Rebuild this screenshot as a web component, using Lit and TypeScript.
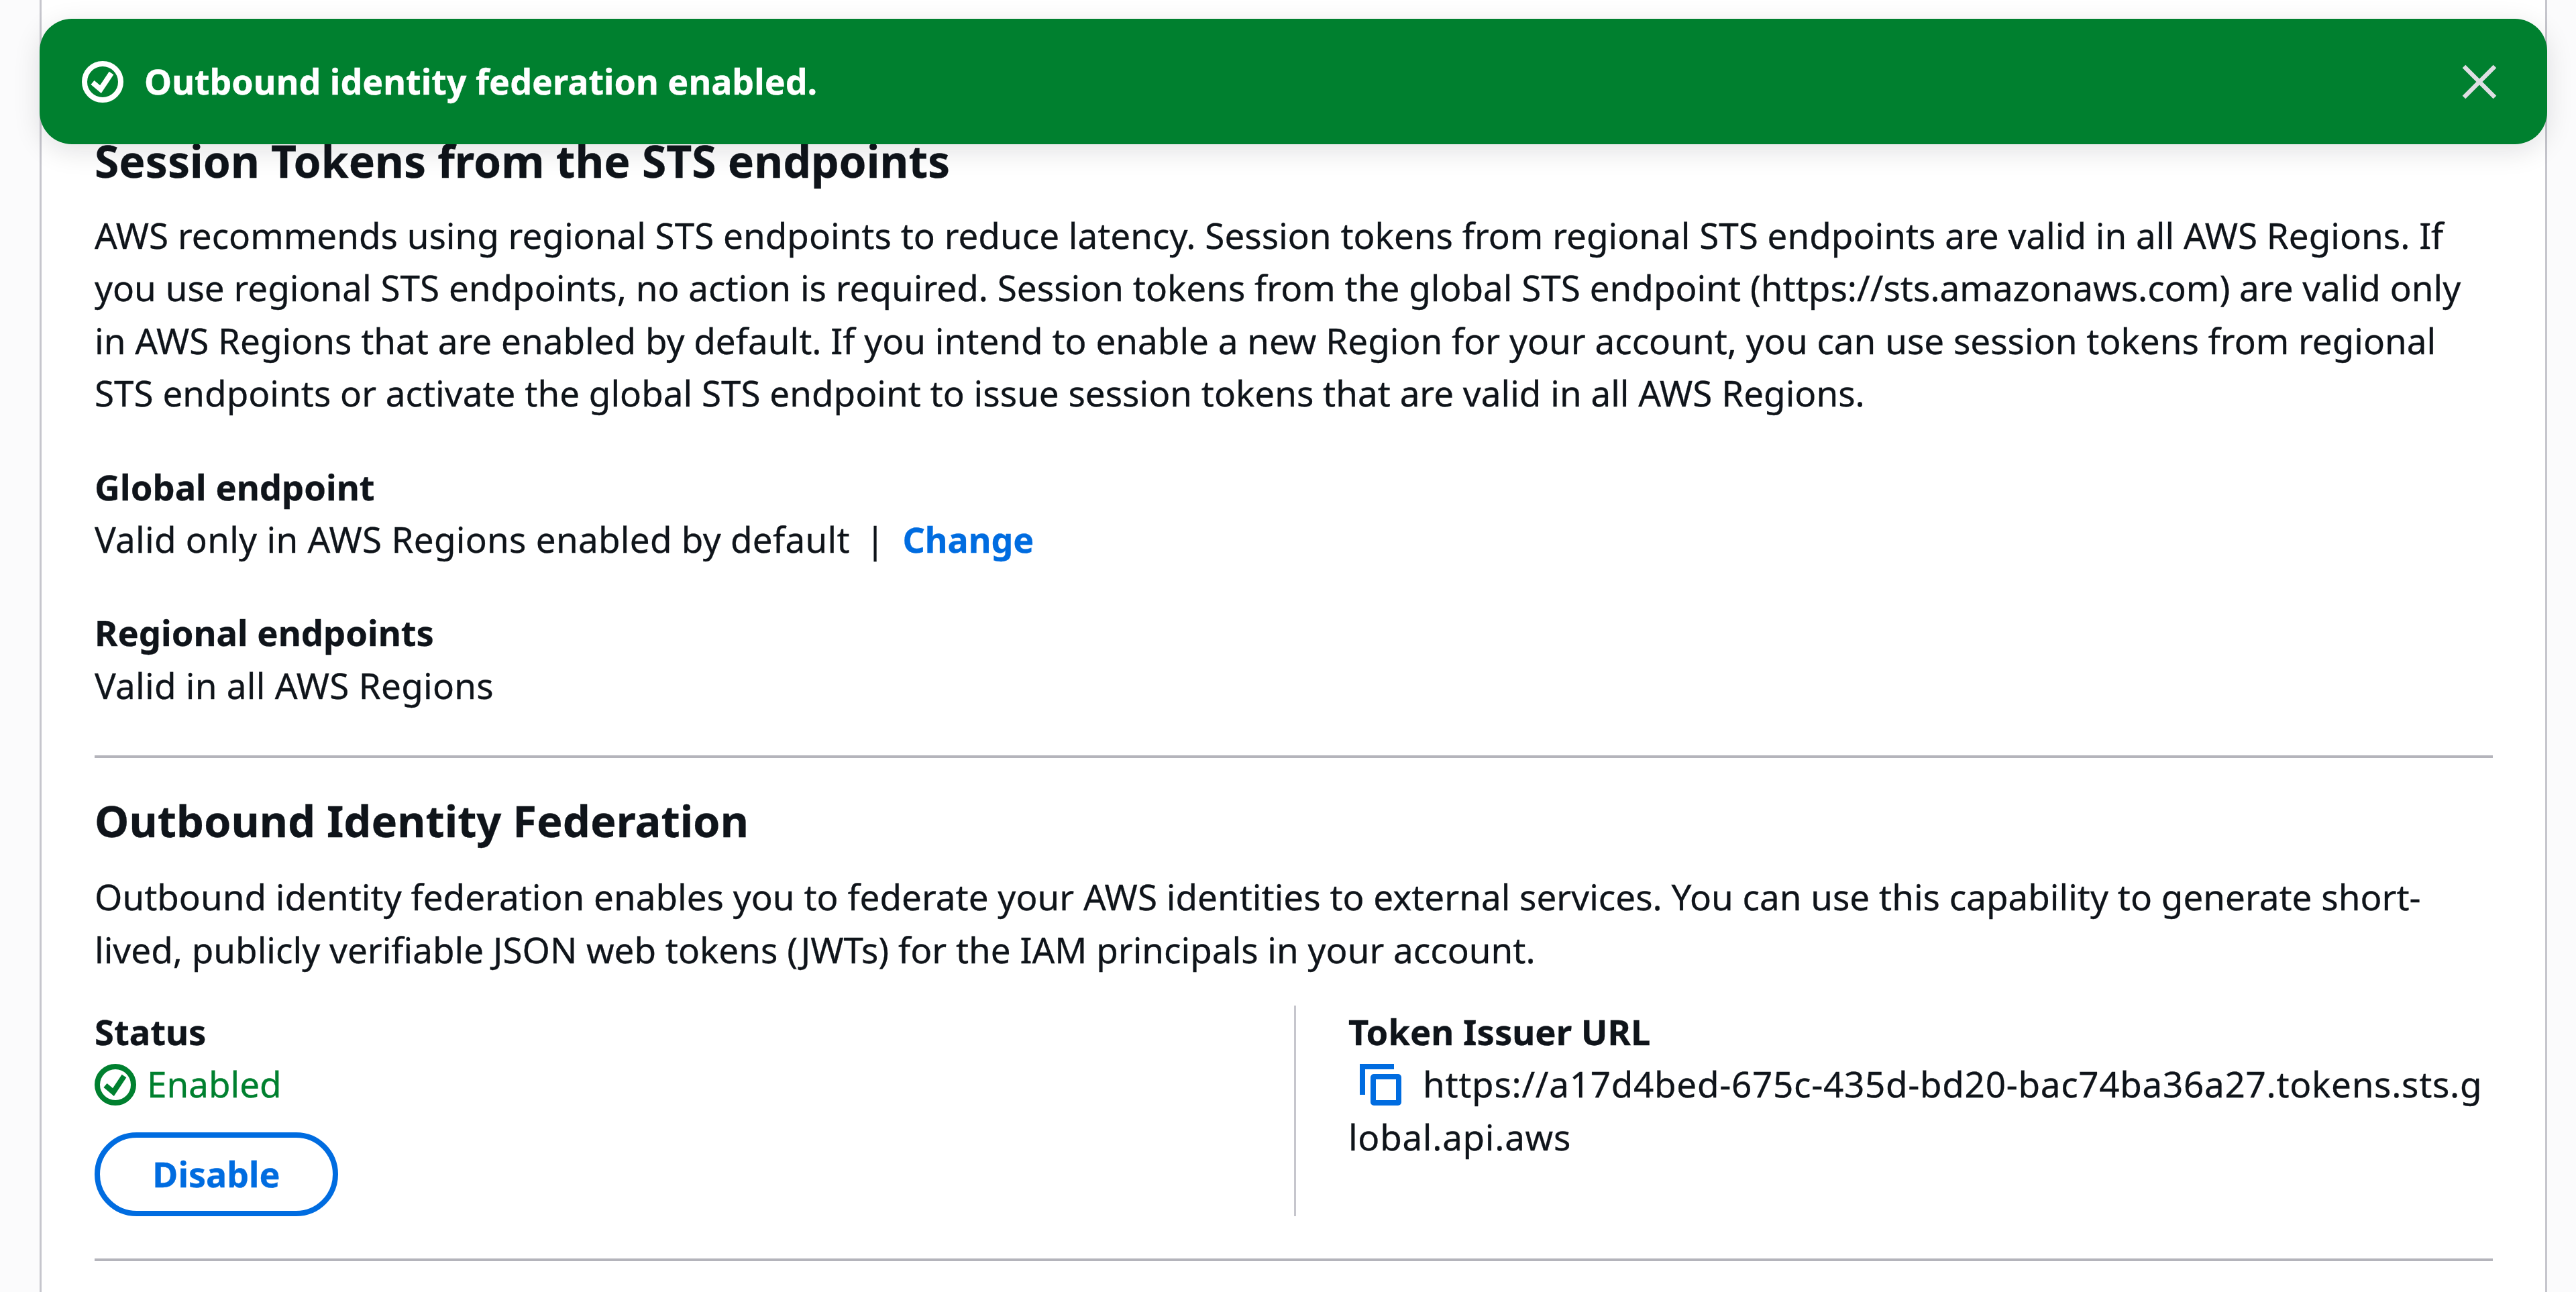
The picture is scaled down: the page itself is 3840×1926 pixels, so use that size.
import { LitElement, html, css, svg } from 'lit';
import { customElement } from 'lit/decorators.js';

const circleCheck = svg`<circle cx="31" cy="31" r="27" fill="none" stroke="currentColor" stroke-width="8"/><path d="M16 32l12 10 16-24" fill="none" stroke="currentColor" stroke-width="8"/>`;

@customElement('app-root')
class AppRoot extends LitElement {
  render() {
    return html`
      <div class="page">
        <div class="flash">
          <svg class="flash-icon" viewBox="0 0 62 62">${circleCheck}</svg>
          <span class="flash-text">Outbound identity federation enabled.</span>
          <svg class="flash-close" viewBox="0 0 52 52">
            <path d="M3 3l46 46M49 3L3 49" fill="none" stroke="currentColor" stroke-width="6.5"/>
          </svg>
        </div>

        <div class="card">
          <h2 class="first">Session Tokens from the STS endpoints</h2>
          <p>AWS recommends using regional STS endpoints to reduce latency. Session tokens from regional STS endpoints are valid in all AWS Regions. If you use regional STS endpoints, no action is required. Session tokens from the global STS endpoint (https://sts.amazonaws.com) are valid only in AWS Regions that are enabled by default. If you intend to enable a new Region for your account, you can use session tokens from regional STS endpoints or activate the global STS endpoint to issue session tokens that are valid in all AWS Regions.</p>

          <div class="field">
            <div class="label">Global endpoint</div>
            <div class="value">Valid only in AWS Regions enabled by default<span class="sep">|</span><a class="link">Change</a></div>
          </div>
          <div class="field">
            <div class="label">Regional endpoints</div>
            <div class="value">Valid in all AWS Regions</div>
          </div>

          <hr class="rule-one" />

          <h2>Outbound Identity Federation</h2>
          <p class="intro">Outbound identity federation enables you to federate your AWS identities to external services. You can use this capability to generate short-lived, publicly verifiable JSON web tokens (JWTs) for the IAM principals in your account.</p>

          <div class="columns">
            <div>
              <div class="label">Status</div>
              <div class="status">
                <svg class="status-icon" viewBox="0 0 62 62">${circleCheck}</svg>
                <span>Enabled</span>
              </div>
              <button class="btn">Disable</button>
            </div>
            <div class="col-token">
              <div class="label">Token Issuer URL</div>
              <div class="url">
                <svg class="copy" viewBox="0 0 62 62">
                  <path d="M4 46V4h47" fill="none" stroke="currentColor" stroke-width="8"/>
                  <rect x="20" y="19" width="38" height="39" rx="1" fill="none" stroke="currentColor" stroke-width="8"/>
                </svg>https://a17d4bed-675c-435d-bd20-bac74ba36a27.tokens.sts.global.api.aws
              </div>
            </div>
          </div>

          <hr class="rule-two" />
        </div>
      </div>
    `;
  }

  static styles = css`
    :host {
      display: block;
      font-family: 'Noto Sans', 'Open Sans', sans-serif;
      color: #0f141a;
    }

    .page {
      position: relative;
      height: 1926px;
      overflow: hidden;
      background: #fbfbfc;
      font-size: 53px;
      line-height: 78.4px;
      -webkit-text-stroke: 0.3px currentColor;
    }

    .flash {
      position: absolute;
      top: 28px;
      left: 59px;
      width: 3738px;
      height: 187px;
      box-sizing: border-box;
      display: flex;
      align-items: center;
      padding: 0 75px 0 63px;
      border-radius: 48px;
      background: #00802f;
      color: #fff;
      box-shadow: 0 10px 40px rgba(15, 20, 26, 0.12);
      z-index: 2;
    }

    .flash-icon {
      width: 62px;
      height: 62px;
      margin-right: 31px;
      flex: none;
    }

    .flash-text {
      flex: 1;
      font-weight: 700;
      font-size: 52px;
    }

    .flash-close {
      width: 52px;
      height: 52px;
      color: #dedee3;
      flex: none;
    }

    .card {
      box-sizing: border-box;
      margin-left: 59px;
      width: 3738px;
      height: 1926px;
      padding: 190px 78px 0 79px;
      background: #fff;
      border-left: 3px solid #c6c6cd;
      border-right: 3px solid #c6c6cd;
    }

    h2 {
      margin: 0;
      font-size: 65px;
      line-height: 98px;
      font-weight: 700;
    }

    h2.first {
      font-size: 66px;
    }

    p {
      margin: 24px 0 0;
    }

    p.intro {
      margin-top: 26px;
    }

    .label {
      font-weight: 700;
      font-size: 52.5px;
    }

    .field {
      margin-top: 61px;
    }

    .value {
      letter-spacing: 0.27px;
    }

    .sep {
      margin: 0 26px 0 23px;
    }

    .link {
      color: #006ce0;
      font-weight: 700;
      font-size: 52px;
      letter-spacing: 0;
    }

    hr {
      border: none;
      height: 4px;
      margin: 0;
      background: #b4b4bb;
    }

    .rule-one {
      margin: 65px 0 44px;
    }

    .columns {
      display: grid;
      grid-template-columns: 1788px 1fr;
      margin-top: 44px;
    }

    .col-token {
      border-left: 3px solid #c6c6cd;
      padding-left: 78px;
    }

    .status {
      display: flex;
      align-items: center;
      gap: 16px;
      color: #00802f;
    }

    .status-icon {
      width: 62px;
      height: 62px;
      flex: none;
    }

    .btn {
      display: block;
      width: 363px;
      height: 125px;
      margin-top: 32px;
      padding: 0;
      border: 8px solid #006ce0;
      border-radius: 63px;
      background: #fff;
      color: #006ce0;
      font: inherit;
      font-size: 52px;
      font-weight: 700;
    }

    .url {
      word-break: break-all;
      letter-spacing: 0.7px;
      padding-right: 14px;
    }

    .copy {
      width: 62px;
      height: 62px;
      margin: 0 32px 0 17px;
      color: #006ce0;
      vertical-align: -12px;
    }

    .rule-two {
      margin-top: 63px;
    }
  `;
}

declare global {
  interface HTMLElementTagNameMap {
    'app-root': AppRoot;
  }
}
